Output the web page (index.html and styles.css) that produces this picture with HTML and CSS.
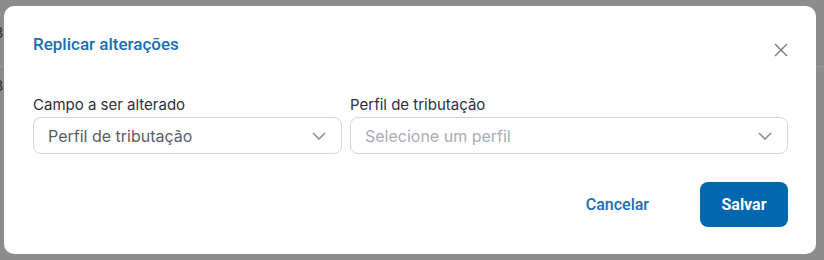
FILE: index.html
```html
<!DOCTYPE html>
<html>
  <head>
    <meta name="viewport" content="width=device-width, initial-scale=1" />
    <link rel="stylesheet" href="styles.css">
  </head>
  <body>
    <div class="backdrop">
      <span class="behind-cell behind-cell--first">3</span>
      <div class="behind-line"></div>
      <span class="behind-cell behind-cell--second">3</span>
    </div>

    <div class="modal">
      <div class="modal-header">
        <h2 class="modal-title">Replicar alterações</h2>
        <button class="close-button" aria-label="Fechar">
          <svg width="14" height="14" viewBox="0 0 14 14">
            <path d="M1 1 L13 13 M13 1 L1 13" stroke="#7a7a7a" stroke-width="1.4" fill="none" />
          </svg>
        </button>
      </div>

      <div class="fields">
        <div class="field">
          <label class="field-label">Campo a ser alterado</label>
          <div class="select">
            <span class="select-value">Perfil de tributação</span>
            <svg class="chevron" width="14" height="8" viewBox="0 0 14 8">
              <path d="M1 1 L7 7 L13 1" stroke="#8b909c" stroke-width="1.6" fill="none" />
            </svg>
          </div>
        </div>
        <div class="field">
          <label class="field-label">Perfil de tributação</label>
          <div class="select">
            <span class="select-value select-value--placeholder">Selecione um perfil</span>
            <svg class="chevron" width="14" height="8" viewBox="0 0 14 8">
              <path d="M1 1 L7 7 L13 1" stroke="#8b909c" stroke-width="1.6" fill="none" />
            </svg>
          </div>
        </div>
      </div>

      <div class="modal-footer">
        <button class="btn btn-link">Cancelar</button>
        <button class="btn btn-primary">Salvar</button>
      </div>
    </div>
  </body>
</html>
```

FILE: styles.css
```css
html,
body {
  margin: 0;
  height: 100%;
}

body {
  position: relative;
  background: #8c8c8c;
  font-family: Inter, "Noto Sans", sans-serif;
  overflow: hidden;
}

.backdrop {
  position: absolute;
  inset: 0;
  overflow: hidden;
}

.behind-line {
  position: absolute;
  left: 0;
  right: 0;
  top: 66px;
  height: 1px;
  background: #9a9a9a;
}

.behind-cell {
  position: absolute;
  left: -6px;
  font-size: 15px;
  line-height: 18px;
  color: #2a2f3a;
}

.behind-cell--first {
  top: 24px;
}

.behind-cell--second {
  top: 77px;
}

.modal {
  position: relative;
  box-sizing: border-box;
  width: 812px;
  height: 248px;
  margin: 6px 0 0 4px;
  padding: 28px 28px 26px 29px;
  background: #ffffff;
  border-radius: 10px;
  display: flex;
  flex-direction: column;
}

.modal-header {
  display: flex;
  justify-content: space-between;
  align-items: flex-start;
}

.modal-title {
  margin: 0;
  font-family: Roboto, "Liberation Sans", sans-serif;
  font-size: 17px;
  font-weight: 500;
  line-height: 20px;
  color: #1b6db4;
}

.close-button {
  border: 0;
  padding: 0;
  background: none;
  margin: 9px 0 0 0;
  width: 14px;
  height: 14px;
  display: flex;
}

.fields {
  display: grid;
  grid-template-columns: 309px 1fr;
  gap: 8px;
  margin-top: 38px;
}

.field {
  display: flex;
  flex-direction: column;
  gap: 2px;
}

.field-label {
  font-size: 15px;
  line-height: 20px;
  color: #2d3140;
}

.select {
  box-sizing: border-box;
  height: 37px;
  border: 1px solid #d3d6de;
  border-radius: 8px;
  padding: 0 15px 0 14px;
  display: flex;
  align-items: center;
  justify-content: space-between;
}

.select-value {
  font-size: 16px;
  color: #5a5e6b;
}

.select-value--placeholder {
  color: #a9acb5;
}

.modal-footer {
  display: flex;
  justify-content: flex-end;
  align-items: center;
  gap: 27px;
  margin-top: 28px;
}

.btn {
  font-family: Roboto, "Liberation Sans", sans-serif;
  border: 0;
  cursor: pointer;
}

.btn-link {
  background: none;
  color: #1b6db4;
  font-size: 16px;
  font-weight: 500;
  padding: 0 24px;
}

.btn-primary {
  width: 88px;
  height: 45px;
  border-radius: 8px;
  background: #0066ad;
  color: #ffffff;
  font-weight: 700;
  font-size: 16px;
}
```
